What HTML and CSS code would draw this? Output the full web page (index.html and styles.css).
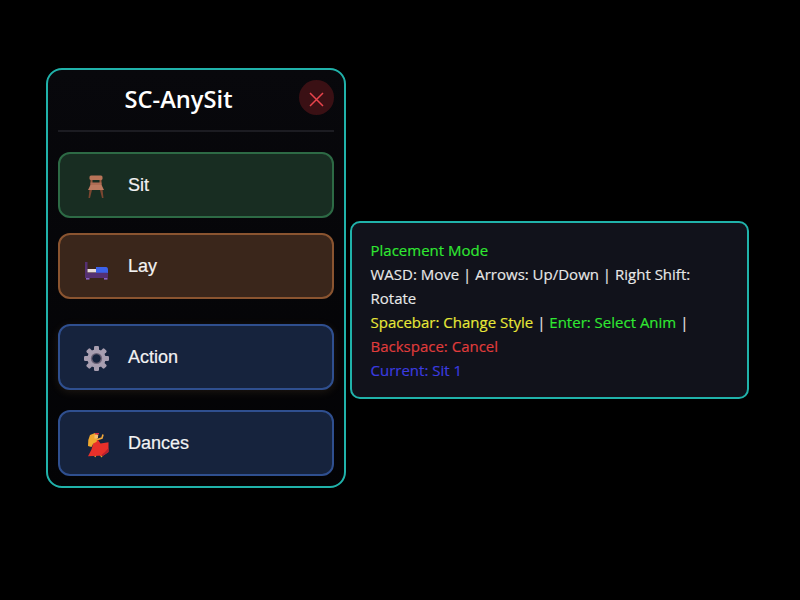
FILE: index.html
```html
<!DOCTYPE html>
<html lang="en">
<head>
  <meta charset="UTF-8">
  <title>SC-AnySit</title>
  <link rel="stylesheet" href="styles.css">
</head>
<body>
  <div class="menu">
    <div class="menu-header">
      <h1>SC-AnySit</h1>
      <button class="close-btn">
        <svg width="15" height="15" viewBox="0 0 15 15"><path d="M1 1 L14 14 M14 1 L1 14" stroke="#e8444c" stroke-width="1.5" fill="none"/></svg>
      </button>
    </div>

    <div class="menu-btn sit">
      <svg class="icon" width="26" height="30" viewBox="0 0 26 30">
        <path d="M6 15 L4.5 28 L6 28 L8 20 Z M18 15 L19.5 28 L18 28 L16 20 Z" fill="#7a4630"/>
        <path d="M6.5 9 H8.5 V16 H6.5 Z M15.5 9 H17.5 V16 H15.5 Z" fill="#98583f"/>
        <rect x="5.5" y="5.5" width="13" height="4.5" rx="1.5" fill="#b87458"/>
        <rect x="6.5" y="12.5" width="11" height="3" fill="#b06c54"/>
        <path d="M6.5 15 H17.5 L20 20 H4 Z" fill="#bc7a60"/>
      </svg>
      <span>Sit</span>
    </div>

    <div class="menu-btn lay">
      <svg class="icon" width="26" height="30" viewBox="0 0 26 30">
        <rect x="1" y="11" width="2.5" height="16" fill="#553072"/>
        <path d="M12 16 H22 Q24 16 24 19 V22 H12 Z" fill="#3c62ea"/>
        <rect x="3.5" y="18" width="8.5" height="3.5" fill="#e6dcdc"/>
        <rect x="1" y="21.7" width="23" height="5.3" rx="0.8" fill="#553072"/>
        <rect x="2" y="27" width="3.5" height="1.6" fill="#8a60c4"/>
        <rect x="20" y="27" width="3.5" height="1.6" fill="#8a60c4"/>
      </svg>
      <span>Lay</span>
    </div>

    <div class="menu-btn action">
      <svg class="icon" width="26" height="30" viewBox="0 0 26 30">
        <g fill="#a89eb0">
          <circle cx="12.5" cy="16.5" r="9.2"/>
          <rect x="10" y="4" width="5" height="25" rx="1.2"/>
          <rect x="10" y="4" width="5" height="25" rx="1.2" transform="rotate(45 12.5 16.5)"/>
          <rect x="10" y="4" width="5" height="25" rx="1.2" transform="rotate(90 12.5 16.5)"/>
          <rect x="10" y="4" width="5" height="25" rx="1.2" transform="rotate(135 12.5 16.5)"/>
        </g>
        <circle cx="12.5" cy="16.5" r="5.6" fill="#6b6276"/>
        <circle cx="12.5" cy="16.5" r="4.2" fill="#16233d"/>
      </svg>
      <span>Action</span>
    </div>

    <div class="menu-btn dances">
      <svg class="icon" width="26" height="30" viewBox="0 0 26 30">
        <path d="M12 12 L18 10 L19 6.5" stroke="#f2a93c" stroke-width="1.6" fill="none"/>
        <path d="M15 25 L18 29 M12 26 L11 29" stroke="#e89a28" stroke-width="1.4" fill="none"/>
        <path d="M10 12.5 L14 12 L16.5 15.5 L24.5 14.2 L24.5 24 L19.5 27.5 L4 28.2 L7.5 21.5 Z" fill="#e8302a"/>
        <path d="M24.5 20 L24.5 24 L19.5 27.5 L17 27.6 L21 24 Z" fill="#b8202e"/>
        <path d="M4 18 L4.3 12 L6 7 L11 5 L14.5 7 L13 10 L12.7 13.7 L9.3 15.5 L7.5 19 Z" fill="#f0a82e"/>
        <rect x="10.5" y="7" width="3.5" height="3.5" fill="#f6c070"/>
        <rect x="11" y="5" width="4" height="1.4" fill="#d8304a"/>
      </svg>
      <span>Dances</span>
    </div>
  </div>

  <div class="info">
    <div class="green">Placement Mode</div>
    <div>WASD: Move | Arrows: Up/Down | Right Shift: Rotate</div>
    <div><span class="yellow">Spacebar: Change Style</span> | <span class="green">Enter: Select Anim</span> | <span class="red">Backspace: Cancel</span></div>
    <div class="blue">Current: Sit 1</div>
  </div>
</body>
</html>
```

FILE: styles.css
```css
html, body {
  height: 100%;
}
body {
  margin: 0;
  background-color: #000;
  display: flex;
  align-items: flex-start;
  padding: 68px 0 0 46px;
  box-sizing: border-box;
  overflow: hidden;
}
.menu {
  width: 300px;
  height: 420px;
  box-sizing: border-box;
  padding: 10px;
  border: 2px solid #20b2aa;
  border-radius: 16px;
  background: linear-gradient(#08080c, #030305);
}
.menu-header {
  display: flex;
  align-items: center;
  padding-bottom: 15px;
  border-bottom: 2px solid #1c1c22;
  margin-bottom: 20px;
}
.menu-header h1 {
  flex: 1;
  margin: 4px 0 0;
  text-align: center;
  color: #fff;
  font-family: "Open Sans", sans-serif;
  font-size: 23.7px;
  font-weight: 600;
  line-height: 31px;
}
.close-btn {
  width: 35px;
  height: 35px;
  padding: 3px 0 0;
  border: none;
  border-radius: 50%;
  background-color: #3a1014;
  display: flex;
  align-items: center;
  justify-content: center;
}
.menu-btn {
  height: 66px;
  box-sizing: border-box;
  display: flex;
  align-items: center;
  gap: 18px;
  padding-left: 24px;
  border: 2px solid;
  border-radius: 12px;
  color: #f2f2f2;
  font-family: "Liberation Sans", Arial, sans-serif;
  font-size: 18px;
  -webkit-text-stroke: 0.2px #f2f2f2;
}
.icon {
  flex-shrink: 0;
}
.sit {
  background-color: #182d22;
  border-color: #2d6a45;
  margin-bottom: 15px;
}
.lay {
  background-color: #3a261b;
  border-color: #8a5430;
  margin-bottom: 25px;
}
.action {
  background-color: #16233d;
  border-color: #2f4f8f;
  margin-bottom: 20px;
  box-shadow: 0 2px 10px rgba(255, 200, 120, 0.1);
}
.dances {
  background-color: #16233d;
  border-color: #2f4f8f;
}
.info {
  width: 399px;
  box-sizing: border-box;
  margin: 153px 0 0 4px;
  padding: 15px 19px 15px 18.5px;
  border: 2px solid #20b2aa;
  border-radius: 10px;
  background-color: #11121b;
  color: #e8e8e8;
  font-family: "Open Sans", sans-serif;
  font-size: 15px;
  line-height: 24px;
  -webkit-text-stroke: 0.15px;
}
.green {
  color: #30e832;
}
.yellow {
  color: #e8e838;
}
.red {
  color: #e03c3c;
}
.blue {
  color: #3c3ce0;
}
```
